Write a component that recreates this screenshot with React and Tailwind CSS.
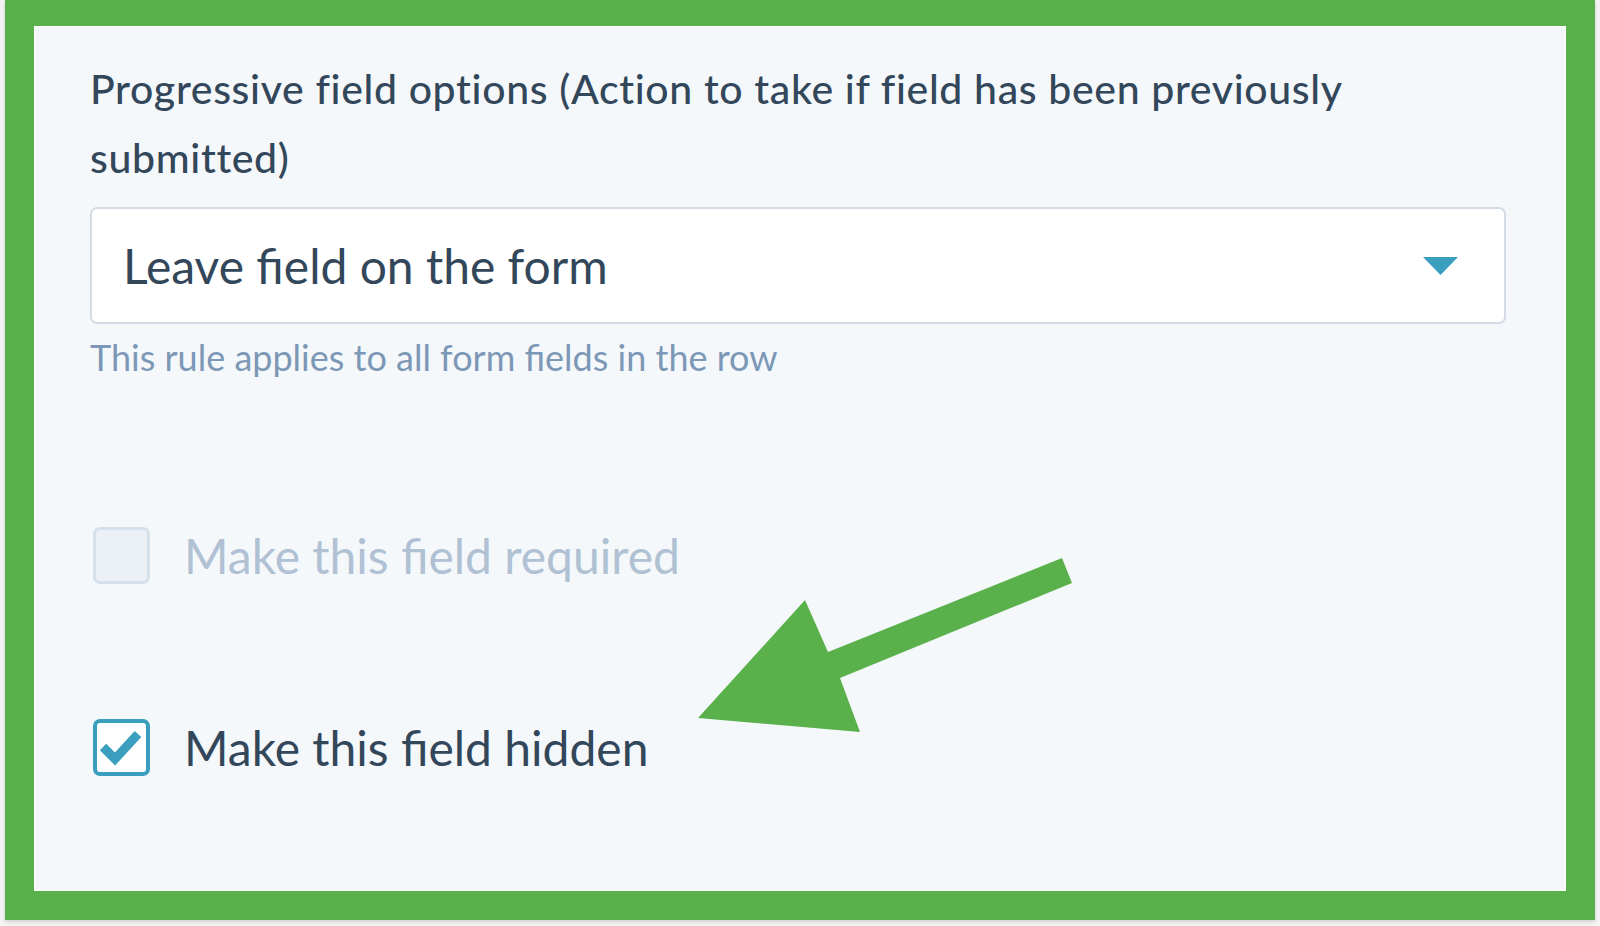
export default function App() {
  return (
    <div className="relative w-[1600px] h-[926px] bg-[#f3f4f4] overflow-hidden" style={{ fontFamily: "Lato, 'Noto Sans', sans-serif" }}>
      <div className="ml-[5px] w-[1590px] h-[920px] border-[#5ab14b] border-x-[29px] border-t-[26px] border-b-[29px] bg-[#f5f8fb] shadow-[0_2px_4px_rgba(0,0,0,0.15)]">
        <div className="h-full border border-white pl-[55px] pr-[59px] pt-[27px]">
          <div className="text-[41px] leading-[69px] font-medium text-[#33475b] whitespace-nowrap tracking-[0.65px]">
            Progressive field options (Action to take if field has been previously
            <br />
            submitted)
          </div>
          <div className="mt-[15px] h-[117px] bg-white border-2 border-[#d3dce6] rounded-[7px] flex items-center justify-between pl-[31px] pr-[46px]">
            <span className="text-[48px] text-[#33475b]">Leave field on the form</span>
            <svg width="35" height="18" viewBox="0 0 35 18">
              <polygon points="0,0 35,0 17.5,18" fill="#3a9fbf" />
            </svg>
          </div>
          <div className="mt-[13px] text-[36px] leading-[40px] text-[#7c98b6]">
            This rule applies to all form fields in the row
          </div>
          <div className="mt-[150px] flex items-center gap-[34px] pl-[3px]">
            <div className="w-[57px] h-[57px] rounded-[7px] border-[3px] border-[#d6e0ea] bg-[#eaf0f6]" />
            <span className="text-[48px] leading-[57px] text-[#b0c1d4]">Make this field required</span>
          </div>
          <div className="mt-[135px] flex items-center gap-[34px] pl-[3px]">
            <div className="w-[57px] h-[57px] rounded-[7px] border-[4px] border-[#3a9fbf] bg-white flex items-center justify-center">
              <svg width="49" height="49" viewBox="0 0 49 49">
                <polyline points="6,24 18,36 41,11" fill="none" stroke="#3a9fbf" strokeWidth="9" strokeLinejoin="miter" strokeLinecap="butt" />
              </svg>
            </div>
            <span className="text-[48px] leading-[57px] text-[#33475b]">Make this field hidden</span>
          </div>
        </div>
      </div>
      <svg className="absolute left-0 top-0 pointer-events-none" width="1600" height="926" viewBox="0 0 1600 926">
        <polygon points="1062,558 1072,583 840,678 860,732 698,718 805,600 828,652" fill="#5ab14b" />
      </svg>
    </div>
  );
}
